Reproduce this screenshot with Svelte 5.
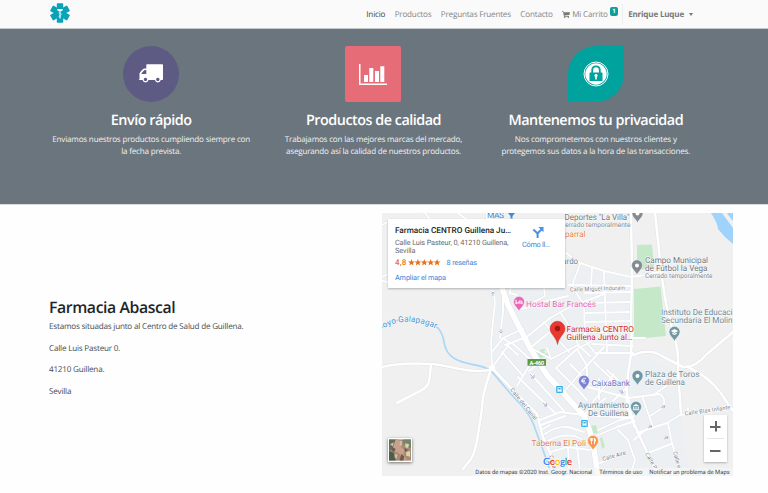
<script>
  const nav = ['Productos', 'Preguntas Fruentes', 'Contacto'];

  const mainRoad = 'M488 213 L501 285 L508 305 L530 348 L547 375 L566 396 L584 416 Q590 430 593 443 L598 476';

  const minorRoads = [
    // north-west streets
    'M425 213 L432 222 M458 213 L470 222 M382 225 L394 219 M382 281 L400 284 M382 277 L392 272',
    'M493 291 Q496 300 494 312 L491 342 L492 368 M492 352 L503 338 L510 343 L494 365',
    'M511 285 L510 293 L517 295 M544 288 L545 296 L532 303 M518 310 L551 300 L568 296',
    'M503 287 L503 312 L500 338',
    // around the pharmacy
    'M503 338 L523 329 M523 340 L550 318 L568 308 L604 294 M530 348 L552 330 M505 345 L524 338',
    'M551 359 L578 345 M535 350 L551 359 L547 348 M560 312 L575 335 L578 345 L590 356 M544 322 L556 337 L569 352',
    'M556 368 L577 349 L587 366 L587 384 M570 364 L590 384 M577 349 L592 341 M556 368 L578 390 L587 400',
    // between main road and canal
    'M502 352 L523 376 M512 343 L532 361 L517 386 M518 377 L555 413 M530 373 L564 411 M529 371 L537 365 M507 345 L518 355',
    'M540 420 L560 412 L583 415 L633 418 M541 425 L565 416 M545 434 Q556 426 568 427 L584 432 M548 441 Q560 434 575 436 L590 443',
    'M551 452 L567 447 L590 450 M568 447 L569 468 M576 440 L580 470 M541 430 L550 425 M555 462 L568 459',
    // northern grid
    'M566 253 L580 263 L604 271 L631 277 M580 264 L572 286 L584 305 L585 340 L595 353 L633 353',
    'M592 268 L591 286 M604 272 L607 353 M585 293 L631 292 M585 303 L631 302 M585 313 L631 312 M586 322 L631 321 M586 332 L606 332 M592 344 L633 346 M568 285 L631 286',
    'M631 277 L645 275 M632 338 L645 338 M645 275 L659 272',
    // centre
    'M563 393 L583 370 L604 347 M588 387 L628 398 M614 374 L590 406 M607 370 L626 387 L634 427 M594 362 L617 384 M599 379 L599 399',
    'M598 430 L620 420 L634 416 M596 436 L617 427 L635 421 M583 415 L606 398 M611 403 L628 386 M618 430 L628 440 L635 460 L630 476 M600 463 L620 455',
    'M628 398 L660 394 Q668 400 661 409 L650 416 M642 396 L653 427 M655 394 L666 386 L664 376',
    'M637 433 L667 423 L680 415 L733 409 M668 423 L671 439 L681 476 M648 453 L671 444 M634 440 L645 430 L653 427',
    'M687 415 L688 408'
  ];

  const streets = [
    'M382 367 Q400 362 431 364 C450 365 466 374 490 370',
    'M431 364 C429 382 431 385 420 391 L397 403',
    'M490 372 Q485 388 483 397 Q482 412 479 428 Q476 451 471 459 L463 469',
    'M631 213 L632 272 L631 325 Q633 350 628 373 Q626 392 627 407 L640 437 L658 476',
    'M655 213 L659 250 Q661 275 666 303 L675 340 Q679 352 678 372 L681 414',
    'M633 355 Q650 348 662 356 L683 367 Q695 368 707 354 L733 332 M688 367 Q710 378 720 392 L733 411',
    'M492 368 L510 387 L537 414 L543 437 L552 457 L553 476'
  ];

  // x, y, text, width, colour, size
  const labels = [
    [564.5, 219.7, 'Deportes "La Villa"', 65, '#73787e', 8.4],
    [561, 226.5, 'Cerrado temporalmente', 69.5, '#85898f', 6.6],
    [551, 237.2, 'Chaparral', 34.5, '#e38450', 8.4],
    [551.5, 264, 'Ricardo', 26.5, '#6e8b98', 8.4],
    [645, 263.4, 'Campo Municipal', 63, '#73787e', 8.4],
    [645, 271.4, 'de Fútbol la Vega', 62.5, '#73787e', 8.4],
    [645, 278.2, 'Cerrado temporalmente', 67.5, '#85898f', 6.6],
    [526, 306.7, 'Hostal Bar Francés', 70, '#e568b5', 8.4],
    [566.5, 331.6, 'Farmacia CENTRO', 67.5, '#d12b2b', 8.4],
    [566.5, 340, 'Guillena Junto al…', 66, '#d12b2b', 8.4],
    [661, 315, 'Instituto De Educaci', 71.5, '#6e8b98', 8.4],
    [661, 323.1, 'Secundaria El Molin', 71.5, '#6e8b98', 8.4],
    [645, 376.9, 'Plaza de Toros', 54.5, '#6e8b98', 8.4],
    [645, 385.1, 'de Guillena', 40, '#6e8b98', 8.4],
    [591.5, 386.4, 'CaixaBank', 38.5, '#7676c8', 8.4],
    [578, 407.9, 'Ayuntamiento', 51, '#6e8b98', 8.4],
    [588, 416.1, 'De Guillena', 40.5, '#6e8b98', 8.4],
    [531.5, 446.2, 'Taberna El Poli', 54.5, '#e38450', 8.4]
  ];

  const pins = [
    { x: 637.5, y: 223, c: '#858a93', k: 'dot' },
    { x: 637, y: 275, c: '#858a93', k: 'dot' },
    { x: 519, y: 311.5, c: '#e968b5', k: 'bed' },
    { x: 674.5, y: 341.5, c: '#6f98a5', k: 'cap' },
    { x: 637.5, y: 385.5, c: '#6f98a5', k: 'dot' },
    { x: 584, y: 390.5, c: '#7b83d4', k: 'euro' },
    { x: 636, y: 416.5, c: '#6f98a5', k: 'hall' },
    { x: 593, y: 450.5, c: '#f8954c', k: 'fork' }
  ];

  const star = 'M0 -3.4 L.95 -1.1 L3.4 -1 L1.5 .5 L2.1 2.9 L0 1.6 L-2.1 2.9 L-1.5 .5 L-3.4 -1 L-.95 -1.1 Z';
</script>

<div class="page">
  <nav>
    <svg class="logo" viewBox="0 0 20 20">
      <g fill="#09a3b8">
        <rect x="6.8" y=".2" width="6.4" height="19.6" rx=".8" />
        <rect x="6.8" y=".2" width="6.4" height="19.6" rx=".8" transform="rotate(60 10 10)" />
        <rect x="6.8" y=".2" width="6.4" height="19.6" rx=".8" transform="rotate(120 10 10)" />
      </g>
      <path d="M7 6h6q0 2.200-2.500 2.600v6.900h-1V8.600Q7 8.200 7 6z" fill="#e9fafa" />
      <path d="M8.600 10q3 0 2.800 1.300t-2.500 1.700q0 1.200 2 1.300" fill="none" stroke="#e9fafa" stroke-width=".7" />
    </svg>
    <div class="links">
      <a class="active" href="#inicio">Inicio</a>
      {#each nav as item}<a href="#nav">{item}</a>{/each}
      <a class="cart" href="#carrito">
        <svg viewBox="0 0 16 14"><path d="M0 .5h3l.5 1.800H16L14.800 8 5 9.200l.2 1H14v1.300H4L2.200 2H0z" fill="#777" /><circle cx="5.300" cy="12.600" r="1.400" fill="#777" /><circle cx="12.700" cy="12.600" r="1.400" fill="#777" /></svg>
        <span>Mi Carrito</span><b>1</b>
      </a>
      <a class="user" href="#cuenta">Enrique Luque<i></i></a>
    </div>
  </nav>

  <section class="features">
    <article>
      <div class="tile round">
        <svg width="26" height="20" viewBox="0 0 26 20">
          <path fill="#fff" d="M9 .2h15.300q.7 0 .7.7v14.300q0 .8-.8.8h-1.400a3 3 0 0 1-5.900 0h-6.400a3 3 0 0 1-5.900 0H2.100Q.8 16 .8 15h.7v-5q0-1.200.8-2l2.500-2.700q.8-.9 2-.9H8.300V.9Q8.300.2 9 .2zM6.900 6.100q-.6 0-1 .5L3.800 8.900q-.4.4-.4 1h4.900V6.100zM7.500 13.700a1.700 1.700 0 1 0 .01 0zM19.800 13.700a1.700 1.700 0 1 0 .01 0z" fill-rule="evenodd" />
        </svg>
      </div>
      <h3>Envío rápido</h3>
      <p>Enviamos nuestros productos cumpliendo siempre con<br />la fecha prevista.</p>
    </article>
    <article>
      <div class="tile square">
        <svg width="30" height="23" viewBox="0 0 30 23">
          <path fill="#fff" d="M1 1h1.500v19.500H29V22H1zM6 12h4v7H6zM11.300 5h4v14h-4zM17 8h4v11h-4zM22.300 3.200h4V19h-4z" />
        </svg>
      </div>
      <h3>Productos de calidad</h3>
      <p>Trabajamos con las mejores marcas del mercado,<br />asegurando así la calidad de nuestros productos.</p>
    </article>
    <article>
      <div class="tile leaf">
        <svg width="26" height="26" viewBox="0 0 26 26">
          <circle cx="13" cy="13" r="12" fill="#00a29d" stroke="#fff" stroke-width="1" />
          <circle cx="13" cy="13" r="10.700" fill="#fff" />
          <path d="M9.200 12V9.200q0-3.900 3.800-3.900t3.800 3.900V12" fill="none" stroke="#00a29d" stroke-width="1.800" />
          <rect x="6.500" y="11.500" width="13" height="8.500" rx=".6" fill="#00a29d" />
          <path d="M13 13a1.600 1.600 0 0 1 .8 3v2.600h-1.600V16a1.600 1.600 0 0 1 .8-3z" fill="#fff" />
        </svg>
      </div>
      <h3>Mantenemos tu privacidad</h3>
      <p>Nos comprometemos con nuestros clientes y<br />protegemos sus datos a la hora de las transacciones.</p>
    </article>
  </section>

  <section class="about">
    <div class="address">
      <h2>Farmacia Abascal</h2>
      <p>Estamos situadas junto al Centro de Salud de Guillena.</p>
      <p>Calle Luis Pasteur 0.</p>
      <p>41210 Guillena.</p>
      <p>Sevilla</p>
    </div>

    <div class="map">
      <svg class="canvas" viewBox="382 213 351 263">
        <rect x="382" y="213" width="351" height="263" fill="#f0f0f0" />
        <path d="M482 287 H560 L580 263 L631 277 L633 350 L678 372 L681 415 L690 476 H553 L543 437 L492 370 V300 Z" fill="#edf0f3" />
        <g fill="#c5e8c8">
          <path d="M637 245 L652 244.500 L654 268 L637 270Z" />
          <path d="M634 289 L660.500 286.500 L666 336 L634 339Z" />
          <path d="M537 353 l4-3 4 2-1 5-5 1zM541 349h4v2h-4zM545 354l3-1.500 2 3-3 2z" />
          <path d="M591 426l5-1 2 8-6 1zM600 438l2-1 3 10-3 2z" />
        </g>
        <path d="M711 213 Q718 224 718 229 Q724 237 733 244 V228 L722 213Z" fill="#9fd3fb" />
        <path d="M727 213 Q731 219 733 221 V213Z" fill="#9fd3fb" />
        <path d="M382 328 Q388 319 410 320 Q427 322 438 328 Q443 334 444 342 C448 370 483 360 493 373 L510 393 L523 407 Q530 416 533 423 L543 450 L552 476" fill="none" stroke="#aad7f7" stroke-width="1.700" />

        <g fill="none" stroke-linejoin="round" stroke-linecap="round">
          {#each minorRoads as d}<path {d} stroke="#e0e2e5" stroke-width="2.700" />{/each}
          {#each streets as d}<path {d} stroke="#dcdee1" stroke-width="3.300" />{/each}
          <path d={mainRoad} stroke="#dcdee1" stroke-width="6.500" />
          {#each minorRoads as d}<path {d} stroke="#fff" stroke-width="1.900" />{/each}
          {#each streets as d}<path {d} stroke="#fff" stroke-width="2.600" />{/each}
          <path d={mainRoad} stroke="#fff" stroke-width="5.600" />
        </g>
        <circle cx="492" cy="368" r="3" fill="#fff" />

        <g fill="none" stroke="#a5a9ce" stroke-width=".8">
          <path d="M493 296v-4m-1.500 1.500l1.500-1.500 1.500 1.500M501 329v4m-1.500-1.500l1.500 1.500 1.500-1.500M530 374l4 4m0-3v3h-3M543 403l4 3m-1-3l1 3h-3" />
          <path d="M619 390l4 3m-1-3l1 3h-3M661 408l4-2m-3 0l3 0-1 2M648 428l4-2m-3 0l3 0-1 2M664 439l4-2m-3 0l3 0-1 2" />
        </g>

        <g font-family="Roboto, sans-serif">
          <g class="street">
            <text x="570" y="291.500" textLength="55" transform="rotate(-2 570 291)">Calle Miguel Indurain</text>
            <text x="685" y="415.500" textLength="46" transform="rotate(-8 685 415)">Calle Blas Infante</text>
            <text x="603" y="461" textLength="24" transform="rotate(-16 603 461)">Calle Aire</text>
            <text x="510" y="390" textLength="39" transform="rotate(51 510 390)">Calle del Canal</text>
            <text x="645" y="454" textLength="18" transform="rotate(60 645 454)">Calle P</text>
            <text x="673" y="452" textLength="18" transform="rotate(75 673 452)">Calle e'</text>
            <text x="549" y="456" textLength="15" transform="rotate(73 549 456)">Canal</text>
          </g>
          <path id="arroyo" d="M384 328 Q408 314 442 331.500" fill="none" />
          <text font-size="8.200" fill="#4c94cc" stroke="#f5f7f8" stroke-width="1.500" paint-order="stroke"><textPath href="#arroyo" textLength="54">oyo Galapagar</textPath></text>
          <text x="487" y="217.500" font-size="8.400" fill="#4089d8" textLength="17">MÁS</text>
          <path d="M508 213h7l-2.500 3v2.500h-2V216z" fill="#4089d8" />

          {#each labels as [x, y, text, w, color, size]}
            <text {x} {y} textLength={w} fill={color} font-size={size} lengthAdjust="spacingAndGlyphs" class="label">{text}</text>
          {/each}

          <rect x="527.500" y="359" width="18.500" height="6.700" rx=".6" fill="#5a9b47" />
          <text x="529.500" y="364.600" font-size="5.800" font-weight="700" fill="#fff" textLength="14.500">A-460</text>
          {#each [[559.5, 389.500], [584.5, 423.500]] as [x, y]}
            <g transform="translate({x} {y})">
              <rect x="-3.300" y="-3.500" width="6.600" height="7" rx=".8" fill="#2daeea" />
              <rect x="-2" y="-2.300" width="4" height="4.200" rx=".6" fill="#fff" />
              <path d="M-1.200-1.500h2.400v1.500h-2.400z" fill="#2daeea" />
              <path d="M-1.500 1.500v1.200M1.500 1.500v1.200" stroke="#fff" stroke-width=".9" />
            </g>
          {/each}
        </g>

        {#each pins as p}
          <g transform="translate({p.x} {p.y})">
            <path d="M0 0C-1-3.500-5.500-5.500-5.500-9.700a5.500 5.500 0 0 1 11 0C5.500-5.500 1-3.500 0 0z" fill={p.c} stroke="#fff" stroke-width=".5" />
            {#if p.k === 'dot'}<circle cy="-9.600" r="2" fill="#fff" />
            {:else if p.k === 'bed'}<path d="M-3-11.800v4.500M3-7.300v-2.200q0-1-1-1H0v2M-3-8.500h6" fill="none" stroke="#fff" stroke-width="1" />
            {:else if p.k === 'cap'}<path d="M-3.700-10.500L0-12.500l3.700 2L0-8.500zM-2.200-9v1.500L0-6.400l2.200-1.100V-9L0-7.800z" fill="#fff" />
            {:else if p.k === 'euro'}<path d="M2-12q-3.700-1.200-3.700 2.200T2-7.600M-2.800-10.300H1M-2.800-9.200H1" fill="none" stroke="#fff" stroke-width=".9" />
            {:else if p.k === 'hall'}<path d="M-3.200-10.600L0-12.600l3.200 2zM-2.800-10h1.100v2.400h-1.100zM-.5-10H.5v2.400H-.5zM1.700-10h1.100v2.400H1.700zM-3.200-7.200h6.400v.9h-6.400z" fill="#fff" />
            {:else}<path d="M-1.500-6.200v-6.200M-2.700-12.400v2.300h2.400v-2.300M1.500-6.200v-6.200q1.400 1 1 3.300H1.500" fill="none" stroke="#fff" stroke-width=".9" />{/if}
          </g>
        {/each}

        <path d="M557.500 344.500C556.500 337 550 334 550 328.700a7.500 7.500 0 0 1 15 0C565 334 558.500 337 557.500 344.500z" fill="#e8382f" stroke="#c7312b" stroke-width=".5" />
        <circle cx="557.500" cy="328.500" r="2.700" fill="#a11713" />

        <text x="543" y="464.800" font-family="Lato, sans-serif" font-size="10" font-weight="700" textLength="29" stroke="#fff" stroke-width="1.200" paint-order="stroke"><tspan fill="#4285f4">G</tspan><tspan fill="#ea4335">o</tspan><tspan fill="#fbbc05">o</tspan><tspan fill="#4285f4">g</tspan><tspan fill="#34a853">l</tspan><tspan fill="#ea4335">e</tspan></text>

        <rect x="474" y="468" width="259" height="8" fill="#f5f5f5" opacity=".75" />
        <g font-family="Roboto, sans-serif" font-size="5.900" fill="#444">
          <text x="475.300" y="474" textLength="117">Datos de mapas ©2020 Inst. Geogr. Nacional</text>
          <text x="599.300" y="474" textLength="43">Términos de uso</text>
          <text x="649.300" y="474" textLength="80.500">Notificar un problema de Maps</text>
        </g>
      </svg>

      <div class="card">
        <svg viewBox="388 219 177 69">
          <g font-family="Roboto, sans-serif" font-size="7.300">
            <text x="395" y="232.700" font-size="8.200" font-weight="500" fill="#222" textLength="116">Farmacia CENTRO Guillena Ju…</text>
            <text x="395" y="245.200" fill="#6a6a6a" textLength="113.500">Calle Luis Pasteur, 0, 41210 Guillena,</text>
            <text x="395" y="253.200" fill="#6a6a6a" textLength="20.500">Sevilla</text>
            <text x="395" y="265.300" font-size="8" font-weight="500" fill="#e7711b" textLength="11.300">4,8</text>
            <text x="446.500" y="265.300" fill="#3d85d8" textLength="30.500">8 reseñas</text>
            <text x="395" y="279.900" fill="#3d85d8" textLength="51">Ampliar el mapa</text>
            <text x="522" y="247.300" fill="#3d85d8" textLength="28">Cómo ll…</text>
          </g>
          {#each [0, 1, 2, 3, 4] as n}<path d={star} fill="#e7711b" transform="translate({411.500 + n * 6.400} 262.500)" />{/each}
          <path d="M537.600 238v-3.700q0-1.200 1-2.100l3-2.700M537.600 234.500q0-1.200-1-2.100l-3.200-2.800" fill="none" stroke="#4a90e2" stroke-width="2" />
          <path d="M538.300 227h5.200v5.200z" fill="#4a90e2" />
        </svg>
      </div>

      <div class="thumb">
        <svg viewBox="0 0 23 22">
          <rect width="23" height="22" fill="#a58b78" />
          <path d="M0 0h8l-2 7-6 5z" fill="#5f6e58" /><path d="M15 0h8v9l-5-1-4-5z" fill="#78836c" />
          <path d="M7 0h3l2 7 4 4-1 5 4 6h-4l-4-7-4-2-3-5z" fill="#c9a08b" /><path d="M0 12l5 2 2 8H0z" fill="#4d5e49" />
          <path d="M17 4l4 1-1 4-3-1zM18 13l4-1v6l-4-1z" fill="#ddd5aa" /><path d="M11 1l3 1-1 5-2-1zM6 15l3 1-1 4-2-1zM1 5l4-2-1 4z" fill="#d8b9aa" />
          <path d="M13 15l3 3-1 4h-4zM4 8l3 2-2 3-3-2zM16 9l4 2-3 2z" fill="#6d5d4d" />
        </svg>
      </div>

      <div class="zoom"><button class="plus" aria-label="Acercar"></button><hr /><button aria-label="Alejar"></button></div>
    </div>
  </section>
</div>

<style>
  :global(body) { background: #fefefe; }
  .page { height: 493px; overflow: hidden; font-family: 'Open Sans', 'Noto Sans', sans-serif; font-size: 8.1px; text-rendering: geometricPrecision; }
  a { color: #858585; text-decoration: none; white-space: nowrap; }
  h2, h3, p { margin: 0; white-space: nowrap; }
  h2, h3 { font-size: 14.400px; font-weight: 600; line-height: 18px; letter-spacing: -0.5px; }

  nav { box-sizing: border-box; height: 29px; padding: 0 75px 0 50px; display: flex; justify-content: space-between; align-items: flex-start; background: #fafafa; border-bottom: 1px solid #c6cacd; }
  .logo { width: 20px; height: 20px; margin-top: 3px; }
  .links { display: flex; align-items: center; height: 28px; gap: 9.5px; letter-spacing: -0.2px; }
  .active { color: #3f3f4b; }
  .cart { display: flex; align-items: center; gap: 2px; }
  .cart svg { width: 8px; height: 7px; }
  .cart b { width: 8.500px; height: 9px; margin-top: -6px; border-radius: 2px; background: #0d9f9b; color: #fff; font-size: 6px; line-height: 9px; text-align: center; }
  .user { display: flex; align-items: center; height: 21px; padding-left: 5px; margin-left: -5.500px; border-left: 1px solid #efefef; font-weight: 700; color: #777; }
  .user i { margin-left: 5px; border: 2.500px solid transparent; border-top: 3px solid #777; border-bottom: 0; }

  .features { box-sizing: border-box; height: 175px; padding: 17px 61px 0 40px; display: grid; grid-template-columns: repeat(3, 1fr); background: #6b757d; color: #fff; text-align: center; }
  .features article { display: flex; flex-direction: column; align-items: center; }
  .tile { width: 56px; height: 56px; display: flex; align-items: center; justify-content: center; }
  .round { border-radius: 50%; background: #5d5b83; }
  .square { border-radius: 2px; background: #e66d77; }
  .leaf { border-radius: 28px 0; background: #00a29d; }
  .features h3 { margin-top: 10px; }
  .features p { margin-top: 4px; line-height: 12.300px; letter-spacing: -0.2px; color: #f2f3f4; }

  .about { display: flex; justify-content: space-between; padding: 8px 35px 0 49px; border-top: 1px solid #d8dbdd; }
  .address { padding-top: 85px; color: #454a50; letter-spacing: -0.2px; }
  .address h2 { margin-bottom: 5px; color: #212529; font-size: 15.800px; letter-spacing: -0.4px; }
  .address p { height: 12px; margin-bottom: 9.600px; line-height: 12px; }
  .map { position: relative; width: 351px; height: 263px; }
  svg { display: block; }
  .canvas { width: 351px; height: 263px; }
  .street text { font-size: 5.700px; fill: #777b80; stroke: #fff; stroke-width: 1px; paint-order: stroke; }
  .label { stroke: #f8f9fa; stroke-width: 1.200px; paint-order: stroke; }
  .card { position: absolute; left: 6px; top: 6px; width: 177px; height: 69px; background: #fff; box-shadow: 0 1px 2px #0004; }
  .card svg { width: 177px; height: 69px; }
  .thumb { position: absolute; left: 6px; top: 225px; width: 22px; height: 22px; border: 1.500px solid #fff; box-shadow: 0 1px 3px #0008; }
  .thumb svg { width: 22px; height: 22px; }
  .zoom { position: absolute; right: 6px; bottom: 14px; width: 23px; height: 47px; background: #fff; box-shadow: 0 1px 2px #0004; }
  .zoom button { display: flex; width: 23px; height: 23px; padding: 0; border: 0; background: linear-gradient(#666, #666) center / 10.500px 2px no-repeat; }
  .zoom .plus { background: linear-gradient(#666, #666) center / 10.500px 2px no-repeat, linear-gradient(#666, #666) center / 2px 10.500px no-repeat; }
  .zoom hr { margin: 0 3px; border: 0; height: 1px; background: #e6e6e6; }
</style>
